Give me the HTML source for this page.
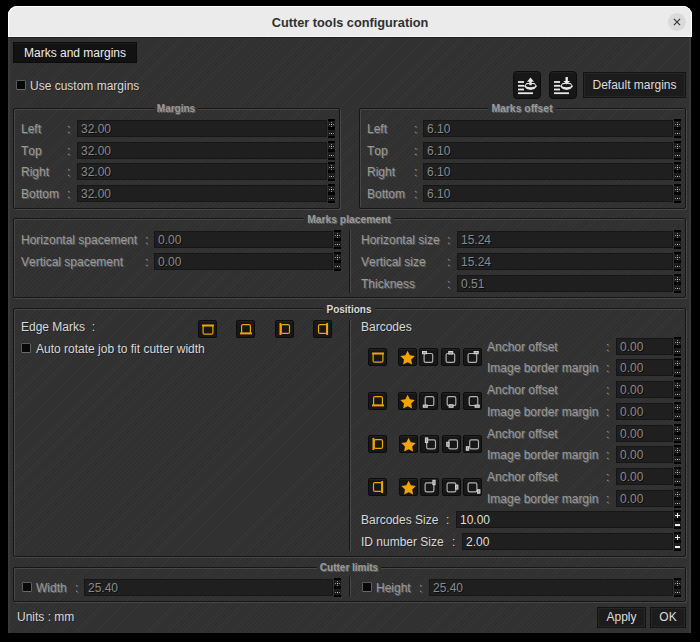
<!DOCTYPE html><html><head><meta charset="utf-8"><style>
*{margin:0;padding:0;box-sizing:border-box}
html,body{width:700px;height:642px;background:#000;overflow:hidden;font-family:"Liberation Sans",sans-serif;font-kerning:none}
.win{position:absolute;left:8px;top:37px;width:683px;height:596px;border-top:1px solid #1e1e1e;background-color:#303030;
 background-image:repeating-linear-gradient(135deg,rgba(255,255,255,0.025) 0 1px,rgba(0,0,0,0) 1px 3px);
 border-left:2px solid #3a3a3a;border-right:2px solid #3a3a3a}
.title{position:absolute;left:8px;top:6px;width:684px;height:31px;background:#ebebeb;border-radius:9px 9px 0 0;
 box-shadow:inset 1px 1px 0 #fff,inset -1px 0 0 #fff,inset 0 -1px 0 #f6f6f6}
.ttext{position:absolute;left:8px;width:684px;top:15px;text-align:center;font-weight:bold;font-size:12.75px;color:#303030;line-height:16px}
.close{position:absolute;left:667.9px;top:13.1px;width:18px;height:18px;border-radius:50%;background:#dadada}
.close svg{position:absolute;left:0;top:0}
.lab,.lab2,.dl{position:absolute;font-size:12px;line-height:14px;white-space:nowrap}
.lab{color:#d8d8d8;text-shadow:1px 1px 0 rgba(0,0,0,0.35)}
.dl{color:#9a9a9a;text-shadow:1px 1px 0 #5e5e5e}
.grp{position:absolute;border:1px solid #161616;border-radius:2px;box-shadow:1px 1px 0 #474747,inset 1px 1px 0 #474747}
.gt,.gte{position:absolute;text-align:center;font-size:10.3px;font-weight:bold;line-height:12px;white-space:nowrap}
.gt span,.gte span{background:#313131;padding:0 3px}
.gt{color:#9a9a9a;text-shadow:1px 1px 0 #5e5e5e}
.gte{color:#dadada;text-shadow:1px 1px 0 rgba(0,0,0,0.4)}
.inp{position:absolute;background:#1f1f1f;border:1px solid #161616;font-size:12px;line-height:15px;color:#8a8a8a;text-shadow:1px 1px 0 #0c0c0c}
.inp span{position:absolute;left:3px;top:1px}
.inp.en{color:#dedede;text-shadow:none}
.spin{position:absolute;width:7px}.spin svg{display:block}
.spin i{position:absolute;display:block}
.spin .p{left:1px;top:3px;width:5px;height:5px;background:
 linear-gradient(#8a8a8a,#8a8a8a) 2px 0/1px 5px no-repeat,linear-gradient(#8a8a8a,#8a8a8a) 0 2px/5px 1px no-repeat}
.spin .m{left:1px;bottom:4px;width:5px;height:1px;background:#8a8a8a}
.spin.en .p{background:linear-gradient(#eee,#eee) 2px 0/1px 5px no-repeat,linear-gradient(#eee,#eee) 0 2px/5px 1px no-repeat}
.spin.en .m{background:#eee;height:2px}
.chk{position:absolute;width:10px;height:10px;background:#080808;border:1px solid #5a5a5a;border-bottom-color:#6a6a6a;border-right-color:#626262;border-radius:1.5px}
.btn{position:absolute;background:#171717;border:1px solid #0c0c0c;border-radius:2px;box-shadow:inset 0 1px 0 #222}
.btn svg{position:absolute;left:0;top:0}
.pb{position:absolute;background:#1c1c1c;border:1px solid #131313;box-shadow:inset 0 0 0 1px #262626;font-size:12px;color:#dcdcdc;text-align:center;white-space:nowrap}
.tab{position:absolute;left:13px;top:42px;width:124px;height:21px;background:#121212;border:1px solid #0c0c0c;box-shadow:inset 0 1px 0 #1c1c1c;font-size:12px;color:#ececec;line-height:21px;text-align:center}
</style></head><body>
<div class="title"></div>
<div class="ttext">Cutter tools configuration</div>
<div class="close"><svg width="18" height="18" viewBox="0 0 18 18"><path d="M5.9 5.9L12.1 12.1M12.1 5.9L5.9 12.1" stroke="#333" stroke-width="1.15" fill="none"/></svg></div>
<div class="win"></div>

<div class="tab">Marks and margins</div>
<div class="chk" style="left:16px;top:80px"></div>
<div class="lab" style="left:30px;top:78.50px;">Use custom margins</div>
<div class="btn" style="left:513px;top:71px;width:28px;height:28px;border-radius:4px"><svg width="28" height="28" viewBox="0 0 28 28">
<rect x="4" y="9.1" width="6" height="1.8" fill="#e8e8e8"/><rect x="4" y="12.9" width="6" height="1.8" fill="#e8e8e8"/>
<rect x="4" y="16.6" width="6" height="1.8" fill="#e8e8e8"/><rect x="4" y="20.3" width="15" height="1.8" fill="#e8e8e8"/>
<path d="M10 14.2L12.6 11H20.6L23 14.2L20.4 16.9L16.6 17.9L12.8 16.9Z" fill="#e8e8e8"/>
<ellipse cx="16.6" cy="13.5" rx="4.7" ry="1.7" fill="#161616"/>
<path d="M13 9.7L16.5 5.5L20 9.7H17.7V13.2H15.3V9.7Z" fill="#e8e8e8"/></svg></div>
<div class="btn" style="left:549px;top:71px;width:28px;height:28px;border-radius:4px"><svg width="28" height="28" viewBox="0 0 28 28">
<rect x="4" y="9.1" width="6" height="1.8" fill="#e8e8e8"/><rect x="4" y="12.9" width="6" height="1.8" fill="#e8e8e8"/>
<rect x="4" y="16.6" width="6" height="1.8" fill="#e8e8e8"/><rect x="4" y="20.3" width="15" height="1.8" fill="#e8e8e8"/>
<path d="M10 14.2L12.6 11H20.6L23 14.2L20.4 16.9L16.6 17.9L12.8 16.9Z" fill="#e8e8e8"/>
<ellipse cx="16.6" cy="13.5" rx="4.7" ry="1.7" fill="#161616"/>
<path d="M13.3 8.9L16.7 12.5L20.1 8.9H17.9V4.9H15.5V8.9Z" fill="#e8e8e8"/></svg></div>
<div class="pb" style="left:583px;top:72px;width:103px;height:26px;line-height:25px">Default margins</div>
<div class="grp" style="left:13px;top:108px;width:327px;height:101px"></div>
<div class="gt" style="left:12px;top:102.8px;width:328px;font-size:10px"><span>Margins</span></div>
<div class="grp" style="left:359px;top:108px;width:327px;height:101px"></div>
<div class="gt" style="left:358px;top:102.8px;width:328px;font-size:10.4px"><span>Marks offset</span></div>
<div class="dl" style="left:21px;top:121.80px;">Left</div>
<div class="dl" style="left:67px;top:121.80px;">:</div>
<div class="inp" style="left:77px;top:120.00px;width:250px;height:17px"><span>32.00</span></div>
<div class="spin" style="left:328px;top:119.00px;height:19px"><svg width="7" height="19" viewBox="0 0 7 19"><rect width="7" height="19" fill="#1c1c1c"/><rect width="7" height="2" fill="#000"/><rect y="8" width="7" height="3" fill="#000"/><rect y="17" width="7" height="2" fill="#000"/><rect x="1" y="5" width="1" height="1" fill="#8a8a8a"/><rect x="3" y="5" width="1" height="1" fill="#d0d0d0"/><rect x="5" y="5" width="1" height="1" fill="#8a8a8a"/><rect x="3" y="3" width="1" height="1" fill="#8a8a8a"/><rect x="3" y="7" width="1" height="1" fill="#8a8a8a"/><rect x="1" y="14" width="1" height="1" fill="#8a8a8a"/><rect x="3" y="14" width="1" height="1" fill="#d0d0d0"/><rect x="5" y="14" width="1" height="1" fill="#8a8a8a"/></svg></div>
<div class="dl" style="left:367px;top:121.80px;">Left</div>
<div class="dl" style="left:414px;top:121.80px;">:</div>
<div class="inp" style="left:423px;top:120.00px;width:250px;height:17px"><span>6.10</span></div>
<div class="spin" style="left:674px;top:119.00px;height:19px"><svg width="7" height="19" viewBox="0 0 7 19"><rect width="7" height="19" fill="#1c1c1c"/><rect width="7" height="2" fill="#000"/><rect y="8" width="7" height="3" fill="#000"/><rect y="17" width="7" height="2" fill="#000"/><rect x="1" y="5" width="1" height="1" fill="#8a8a8a"/><rect x="3" y="5" width="1" height="1" fill="#d0d0d0"/><rect x="5" y="5" width="1" height="1" fill="#8a8a8a"/><rect x="3" y="3" width="1" height="1" fill="#8a8a8a"/><rect x="3" y="7" width="1" height="1" fill="#8a8a8a"/><rect x="1" y="14" width="1" height="1" fill="#8a8a8a"/><rect x="3" y="14" width="1" height="1" fill="#d0d0d0"/><rect x="5" y="14" width="1" height="1" fill="#8a8a8a"/></svg></div>
<div class="dl" style="left:21px;top:143.80px;">Top</div>
<div class="dl" style="left:67px;top:143.80px;">:</div>
<div class="inp" style="left:77px;top:142.00px;width:250px;height:17px"><span>32.00</span></div>
<div class="spin" style="left:328px;top:141.00px;height:19px"><svg width="7" height="19" viewBox="0 0 7 19"><rect width="7" height="19" fill="#1c1c1c"/><rect width="7" height="2" fill="#000"/><rect y="8" width="7" height="3" fill="#000"/><rect y="17" width="7" height="2" fill="#000"/><rect x="1" y="5" width="1" height="1" fill="#8a8a8a"/><rect x="3" y="5" width="1" height="1" fill="#d0d0d0"/><rect x="5" y="5" width="1" height="1" fill="#8a8a8a"/><rect x="3" y="3" width="1" height="1" fill="#8a8a8a"/><rect x="3" y="7" width="1" height="1" fill="#8a8a8a"/><rect x="1" y="14" width="1" height="1" fill="#8a8a8a"/><rect x="3" y="14" width="1" height="1" fill="#d0d0d0"/><rect x="5" y="14" width="1" height="1" fill="#8a8a8a"/></svg></div>
<div class="dl" style="left:367px;top:143.80px;">Top</div>
<div class="dl" style="left:414px;top:143.80px;">:</div>
<div class="inp" style="left:423px;top:142.00px;width:250px;height:17px"><span>6.10</span></div>
<div class="spin" style="left:674px;top:141.00px;height:19px"><svg width="7" height="19" viewBox="0 0 7 19"><rect width="7" height="19" fill="#1c1c1c"/><rect width="7" height="2" fill="#000"/><rect y="8" width="7" height="3" fill="#000"/><rect y="17" width="7" height="2" fill="#000"/><rect x="1" y="5" width="1" height="1" fill="#8a8a8a"/><rect x="3" y="5" width="1" height="1" fill="#d0d0d0"/><rect x="5" y="5" width="1" height="1" fill="#8a8a8a"/><rect x="3" y="3" width="1" height="1" fill="#8a8a8a"/><rect x="3" y="7" width="1" height="1" fill="#8a8a8a"/><rect x="1" y="14" width="1" height="1" fill="#8a8a8a"/><rect x="3" y="14" width="1" height="1" fill="#d0d0d0"/><rect x="5" y="14" width="1" height="1" fill="#8a8a8a"/></svg></div>
<div class="dl" style="left:21px;top:164.80px;">Right</div>
<div class="dl" style="left:67px;top:164.80px;">:</div>
<div class="inp" style="left:77px;top:163.00px;width:250px;height:17px"><span>32.00</span></div>
<div class="spin" style="left:328px;top:162.00px;height:19px"><svg width="7" height="19" viewBox="0 0 7 19"><rect width="7" height="19" fill="#1c1c1c"/><rect width="7" height="2" fill="#000"/><rect y="8" width="7" height="3" fill="#000"/><rect y="17" width="7" height="2" fill="#000"/><rect x="1" y="5" width="1" height="1" fill="#8a8a8a"/><rect x="3" y="5" width="1" height="1" fill="#d0d0d0"/><rect x="5" y="5" width="1" height="1" fill="#8a8a8a"/><rect x="3" y="3" width="1" height="1" fill="#8a8a8a"/><rect x="3" y="7" width="1" height="1" fill="#8a8a8a"/><rect x="1" y="14" width="1" height="1" fill="#8a8a8a"/><rect x="3" y="14" width="1" height="1" fill="#d0d0d0"/><rect x="5" y="14" width="1" height="1" fill="#8a8a8a"/></svg></div>
<div class="dl" style="left:367px;top:164.80px;">Right</div>
<div class="dl" style="left:414px;top:164.80px;">:</div>
<div class="inp" style="left:423px;top:163.00px;width:250px;height:17px"><span>6.10</span></div>
<div class="spin" style="left:674px;top:162.00px;height:19px"><svg width="7" height="19" viewBox="0 0 7 19"><rect width="7" height="19" fill="#1c1c1c"/><rect width="7" height="2" fill="#000"/><rect y="8" width="7" height="3" fill="#000"/><rect y="17" width="7" height="2" fill="#000"/><rect x="1" y="5" width="1" height="1" fill="#8a8a8a"/><rect x="3" y="5" width="1" height="1" fill="#d0d0d0"/><rect x="5" y="5" width="1" height="1" fill="#8a8a8a"/><rect x="3" y="3" width="1" height="1" fill="#8a8a8a"/><rect x="3" y="7" width="1" height="1" fill="#8a8a8a"/><rect x="1" y="14" width="1" height="1" fill="#8a8a8a"/><rect x="3" y="14" width="1" height="1" fill="#d0d0d0"/><rect x="5" y="14" width="1" height="1" fill="#8a8a8a"/></svg></div>
<div class="dl" style="left:21px;top:186.80px;">Bottom</div>
<div class="dl" style="left:67px;top:186.80px;">:</div>
<div class="inp" style="left:77px;top:185.00px;width:250px;height:17px"><span>32.00</span></div>
<div class="spin" style="left:328px;top:184.00px;height:19px"><svg width="7" height="19" viewBox="0 0 7 19"><rect width="7" height="19" fill="#1c1c1c"/><rect width="7" height="2" fill="#000"/><rect y="8" width="7" height="3" fill="#000"/><rect y="17" width="7" height="2" fill="#000"/><rect x="1" y="5" width="1" height="1" fill="#8a8a8a"/><rect x="3" y="5" width="1" height="1" fill="#d0d0d0"/><rect x="5" y="5" width="1" height="1" fill="#8a8a8a"/><rect x="3" y="3" width="1" height="1" fill="#8a8a8a"/><rect x="3" y="7" width="1" height="1" fill="#8a8a8a"/><rect x="1" y="14" width="1" height="1" fill="#8a8a8a"/><rect x="3" y="14" width="1" height="1" fill="#d0d0d0"/><rect x="5" y="14" width="1" height="1" fill="#8a8a8a"/></svg></div>
<div class="dl" style="left:367px;top:186.80px;">Bottom</div>
<div class="dl" style="left:414px;top:186.80px;">:</div>
<div class="inp" style="left:423px;top:185.00px;width:250px;height:17px"><span>6.10</span></div>
<div class="spin" style="left:674px;top:184.00px;height:19px"><svg width="7" height="19" viewBox="0 0 7 19"><rect width="7" height="19" fill="#1c1c1c"/><rect width="7" height="2" fill="#000"/><rect y="8" width="7" height="3" fill="#000"/><rect y="17" width="7" height="2" fill="#000"/><rect x="1" y="5" width="1" height="1" fill="#8a8a8a"/><rect x="3" y="5" width="1" height="1" fill="#d0d0d0"/><rect x="5" y="5" width="1" height="1" fill="#8a8a8a"/><rect x="3" y="3" width="1" height="1" fill="#8a8a8a"/><rect x="3" y="7" width="1" height="1" fill="#8a8a8a"/><rect x="1" y="14" width="1" height="1" fill="#8a8a8a"/><rect x="3" y="14" width="1" height="1" fill="#d0d0d0"/><rect x="5" y="14" width="1" height="1" fill="#8a8a8a"/></svg></div>
<div class="grp" style="left:13px;top:218px;width:673px;height:80px"></div>
<div class="gt" style="left:12px;top:213.8px;width:674px;font-size:10.3px"><span>Marks placement</span></div>
<div style="position:absolute;left:349px;top:230px;width:1px;height:63px;background:#161616;box-shadow:1px 0 0 #474747"></div>
<div class="dl" style="left:21px;top:232.80px;">Horizontal spacement</div>
<div class="dl" style="left:145px;top:232.80px;">:</div>
<div class="inp" style="left:154px;top:231.00px;width:179px;height:17px"><span>0.00</span></div>
<div class="spin" style="left:334px;top:230.00px;height:19px"><svg width="7" height="19" viewBox="0 0 7 19"><rect width="7" height="19" fill="#1c1c1c"/><rect width="7" height="2" fill="#000"/><rect y="8" width="7" height="3" fill="#000"/><rect y="17" width="7" height="2" fill="#000"/><rect x="1" y="5" width="1" height="1" fill="#8a8a8a"/><rect x="3" y="5" width="1" height="1" fill="#d0d0d0"/><rect x="5" y="5" width="1" height="1" fill="#8a8a8a"/><rect x="3" y="3" width="1" height="1" fill="#8a8a8a"/><rect x="3" y="7" width="1" height="1" fill="#8a8a8a"/><rect x="1" y="14" width="1" height="1" fill="#8a8a8a"/><rect x="3" y="14" width="1" height="1" fill="#d0d0d0"/><rect x="5" y="14" width="1" height="1" fill="#8a8a8a"/></svg></div>
<div class="dl" style="left:21px;top:254.80px;">Vertical spacement</div>
<div class="dl" style="left:145px;top:254.80px;">:</div>
<div class="inp" style="left:154px;top:253.00px;width:179px;height:17px"><span>0.00</span></div>
<div class="spin" style="left:334px;top:252.00px;height:19px"><svg width="7" height="19" viewBox="0 0 7 19"><rect width="7" height="19" fill="#1c1c1c"/><rect width="7" height="2" fill="#000"/><rect y="8" width="7" height="3" fill="#000"/><rect y="17" width="7" height="2" fill="#000"/><rect x="1" y="5" width="1" height="1" fill="#8a8a8a"/><rect x="3" y="5" width="1" height="1" fill="#d0d0d0"/><rect x="5" y="5" width="1" height="1" fill="#8a8a8a"/><rect x="3" y="3" width="1" height="1" fill="#8a8a8a"/><rect x="3" y="7" width="1" height="1" fill="#8a8a8a"/><rect x="1" y="14" width="1" height="1" fill="#8a8a8a"/><rect x="3" y="14" width="1" height="1" fill="#d0d0d0"/><rect x="5" y="14" width="1" height="1" fill="#8a8a8a"/></svg></div>
<div class="dl" style="left:361px;top:232.80px;">Horizontal size</div>
<div class="dl" style="left:447px;top:232.80px;">:</div>
<div class="inp" style="left:457px;top:231.00px;width:216px;height:17px"><span>15.24</span></div>
<div class="spin" style="left:674px;top:230.00px;height:19px"><svg width="7" height="19" viewBox="0 0 7 19"><rect width="7" height="19" fill="#1c1c1c"/><rect width="7" height="2" fill="#000"/><rect y="8" width="7" height="3" fill="#000"/><rect y="17" width="7" height="2" fill="#000"/><rect x="1" y="5" width="1" height="1" fill="#8a8a8a"/><rect x="3" y="5" width="1" height="1" fill="#d0d0d0"/><rect x="5" y="5" width="1" height="1" fill="#8a8a8a"/><rect x="3" y="3" width="1" height="1" fill="#8a8a8a"/><rect x="3" y="7" width="1" height="1" fill="#8a8a8a"/><rect x="1" y="14" width="1" height="1" fill="#8a8a8a"/><rect x="3" y="14" width="1" height="1" fill="#d0d0d0"/><rect x="5" y="14" width="1" height="1" fill="#8a8a8a"/></svg></div>
<div class="dl" style="left:361px;top:254.80px;">Vertical size</div>
<div class="dl" style="left:447px;top:254.80px;">:</div>
<div class="inp" style="left:457px;top:253.00px;width:216px;height:17px"><span>15.24</span></div>
<div class="spin" style="left:674px;top:252.00px;height:19px"><svg width="7" height="19" viewBox="0 0 7 19"><rect width="7" height="19" fill="#1c1c1c"/><rect width="7" height="2" fill="#000"/><rect y="8" width="7" height="3" fill="#000"/><rect y="17" width="7" height="2" fill="#000"/><rect x="1" y="5" width="1" height="1" fill="#8a8a8a"/><rect x="3" y="5" width="1" height="1" fill="#d0d0d0"/><rect x="5" y="5" width="1" height="1" fill="#8a8a8a"/><rect x="3" y="3" width="1" height="1" fill="#8a8a8a"/><rect x="3" y="7" width="1" height="1" fill="#8a8a8a"/><rect x="1" y="14" width="1" height="1" fill="#8a8a8a"/><rect x="3" y="14" width="1" height="1" fill="#d0d0d0"/><rect x="5" y="14" width="1" height="1" fill="#8a8a8a"/></svg></div>
<div class="dl" style="left:361px;top:276.80px;">Thickness</div>
<div class="dl" style="left:447px;top:276.80px;">:</div>
<div class="inp" style="left:457px;top:275.00px;width:216px;height:17px"><span>0.51</span></div>
<div class="spin" style="left:674px;top:274.00px;height:19px"><svg width="7" height="19" viewBox="0 0 7 19"><rect width="7" height="19" fill="#1c1c1c"/><rect width="7" height="2" fill="#000"/><rect y="8" width="7" height="3" fill="#000"/><rect y="17" width="7" height="2" fill="#000"/><rect x="1" y="5" width="1" height="1" fill="#8a8a8a"/><rect x="3" y="5" width="1" height="1" fill="#d0d0d0"/><rect x="5" y="5" width="1" height="1" fill="#8a8a8a"/><rect x="3" y="3" width="1" height="1" fill="#8a8a8a"/><rect x="3" y="7" width="1" height="1" fill="#8a8a8a"/><rect x="1" y="14" width="1" height="1" fill="#8a8a8a"/><rect x="3" y="14" width="1" height="1" fill="#d0d0d0"/><rect x="5" y="14" width="1" height="1" fill="#8a8a8a"/></svg></div>
<div class="grp" style="left:13px;top:308px;width:673px;height:249px"></div>
<div class="gte" style="left:12px;top:303.5px;width:674px;font-size:10px"><span>Positions</span></div>
<div style="position:absolute;left:349px;top:320px;width:1px;height:231px;background:#161616;box-shadow:1px 0 0 #474747"></div>
<div class="lab" style="left:21px;top:320.00px;">Edge Marks&nbsp;&nbsp;:</div>
<div class="chk" style="left:21px;top:343px"></div>
<div class="lab" style="left:36px;top:341.80px;">Auto rotate job to fit cutter width</div>
<div class="btn" style="left:198px;top:320px;width:19px;height:18px"><svg width="19" height="18" viewBox="0 0 19 18"><rect x="4.1" y="4.6" width="9.8" height="8.6" rx="1.5" fill="none" stroke="#f0a500" stroke-width="1.2"/><rect x="3" y="3.5" width="12" height="1.9" fill="#f0a500"/></svg></div>
<div class="btn" style="left:236px;top:320px;width:19px;height:18px"><svg width="19" height="18" viewBox="0 0 19 18"><rect x="4.6" y="3.6" width="8.8" height="8.8" rx="1.5" fill="none" stroke="#f0a500" stroke-width="1.2"/><rect x="3" y="11.5" width="12" height="1.9" fill="#f0a500"/></svg></div>
<div class="btn" style="left:275px;top:320px;width:19px;height:18px"><svg width="19" height="18" viewBox="0 0 19 18"><rect x="5.2" y="3.6" width="8.3" height="8.8" rx="1.5" fill="none" stroke="#f0a500" stroke-width="1.2"/><rect x="3.5" y="2" width="1.9" height="12" fill="#f0a500"/></svg></div>
<div class="btn" style="left:313px;top:320px;width:19px;height:18px"><svg width="19" height="18" viewBox="0 0 19 18"><rect x="4.5" y="3.6" width="8.3" height="8.8" rx="1.5" fill="none" stroke="#f0a500" stroke-width="1.2"/><rect x="12.2" y="2" width="1.9" height="12" fill="#f0a500"/></svg></div>
<div class="lab" style="left:361px;top:320.00px;">Barcodes</div>
<div class="btn" style="left:368px;top:348px;width:19px;height:18px"><svg width="19" height="18" viewBox="0 0 19 18"><rect x="4.1" y="4.6" width="9.8" height="8.6" rx="1.5" fill="none" stroke="#f0a500" stroke-width="1.2"/><rect x="3" y="3.5" width="12" height="1.9" fill="#f0a500"/></svg></div>
<div class="btn" style="left:398px;top:348px;width:19px;height:18px"><svg width="19" height="18" viewBox="0 0 19 18"><path d="M8.60,1.80 L10.83,6.33 L15.83,7.05 L12.21,10.57 L13.07,15.55 L8.60,13.20 L4.13,15.55 L4.99,10.57 L1.37,7.05 L6.37,6.33Z" fill="#f0a500"/></svg></div>
<div class="btn" style="left:419px;top:348px;width:19px;height:18px"><svg width="19" height="18" viewBox="0 0 19 18"><rect x="4.1" y="4.5" width="8.6" height="8.9" rx="1.6" fill="none" stroke="#b4b4b4" stroke-width="1.15"/><rect x="2" y="2" width="5" height="3.2" fill="#d4d4d4"/><rect x="3" y="3" width="3" height="1.2000000000000002" fill="#9a9a9a"/></svg></div>
<div class="btn" style="left:441px;top:348px;width:19px;height:18px"><svg width="19" height="18" viewBox="0 0 19 18"><rect x="4.1" y="4.5" width="8.6" height="8.9" rx="1.6" fill="none" stroke="#b4b4b4" stroke-width="1.15"/><rect x="6.2" y="2" width="5" height="3.6" fill="#d4d4d4"/><rect x="7.2" y="3" width="3" height="1.6" fill="#9a9a9a"/></svg></div>
<div class="btn" style="left:463px;top:348px;width:19px;height:18px"><svg width="19" height="18" viewBox="0 0 19 18"><rect x="4.1" y="4.5" width="8.6" height="8.9" rx="1.6" fill="none" stroke="#b4b4b4" stroke-width="1.15"/><rect x="9.6" y="2" width="5.2" height="3.2" fill="#d4d4d4"/><rect x="10.6" y="3" width="3.2" height="1.2000000000000002" fill="#9a9a9a"/></svg></div>
<div class="dl" style="left:487px;top:339.80px;">Anchor offset</div>
<div class="dl" style="left:606px;top:339.80px;">:</div>
<div class="inp" style="left:616px;top:338.00px;width:57px;height:17px"><span>0.00</span></div>
<div class="spin" style="left:674px;top:337.00px;height:19px"><svg width="7" height="19" viewBox="0 0 7 19"><rect width="7" height="19" fill="#1c1c1c"/><rect width="7" height="2" fill="#000"/><rect y="8" width="7" height="3" fill="#000"/><rect y="17" width="7" height="2" fill="#000"/><rect x="1" y="5" width="1" height="1" fill="#8a8a8a"/><rect x="3" y="5" width="1" height="1" fill="#d0d0d0"/><rect x="5" y="5" width="1" height="1" fill="#8a8a8a"/><rect x="3" y="3" width="1" height="1" fill="#8a8a8a"/><rect x="3" y="7" width="1" height="1" fill="#8a8a8a"/><rect x="1" y="14" width="1" height="1" fill="#8a8a8a"/><rect x="3" y="14" width="1" height="1" fill="#d0d0d0"/><rect x="5" y="14" width="1" height="1" fill="#8a8a8a"/></svg></div>
<div class="dl" style="left:487px;top:360.80px;">Image border margin</div>
<div class="dl" style="left:606px;top:360.80px;">:</div>
<div class="inp" style="left:616px;top:359.00px;width:57px;height:17px"><span>0.00</span></div>
<div class="spin" style="left:674px;top:358.00px;height:19px"><svg width="7" height="19" viewBox="0 0 7 19"><rect width="7" height="19" fill="#1c1c1c"/><rect width="7" height="2" fill="#000"/><rect y="8" width="7" height="3" fill="#000"/><rect y="17" width="7" height="2" fill="#000"/><rect x="1" y="5" width="1" height="1" fill="#8a8a8a"/><rect x="3" y="5" width="1" height="1" fill="#d0d0d0"/><rect x="5" y="5" width="1" height="1" fill="#8a8a8a"/><rect x="3" y="3" width="1" height="1" fill="#8a8a8a"/><rect x="3" y="7" width="1" height="1" fill="#8a8a8a"/><rect x="1" y="14" width="1" height="1" fill="#8a8a8a"/><rect x="3" y="14" width="1" height="1" fill="#d0d0d0"/><rect x="5" y="14" width="1" height="1" fill="#8a8a8a"/></svg></div>
<div class="btn" style="left:368px;top:392px;width:19px;height:18px"><svg width="19" height="18" viewBox="0 0 19 18"><rect x="4.6" y="3.6" width="8.8" height="8.8" rx="1.5" fill="none" stroke="#f0a500" stroke-width="1.2"/><rect x="3" y="11.5" width="12" height="1.9" fill="#f0a500"/></svg></div>
<div class="btn" style="left:398px;top:392px;width:19px;height:18px"><svg width="19" height="18" viewBox="0 0 19 18"><path d="M8.60,1.80 L10.83,6.33 L15.83,7.05 L12.21,10.57 L13.07,15.55 L8.60,13.20 L4.13,15.55 L4.99,10.57 L1.37,7.05 L6.37,6.33Z" fill="#f0a500"/></svg></div>
<div class="btn" style="left:419px;top:392px;width:19px;height:18px"><svg width="19" height="18" viewBox="0 0 19 18"><rect x="5.2" y="3.6" width="8.6" height="8.9" rx="1.6" fill="none" stroke="#b4b4b4" stroke-width="1.15"/><rect x="2.8" y="11.6" width="5" height="3.2" fill="#d4d4d4"/><rect x="3.8" y="12.6" width="3" height="1.2000000000000002" fill="#9a9a9a"/></svg></div>
<div class="btn" style="left:441px;top:392px;width:19px;height:18px"><svg width="19" height="18" viewBox="0 0 19 18"><rect x="5.2" y="3.6" width="8.6" height="8.9" rx="1.6" fill="none" stroke="#b4b4b4" stroke-width="1.15"/><rect x="6.6" y="11.2" width="5" height="3.6" fill="#d4d4d4"/><rect x="7.6" y="12.2" width="3" height="1.6" fill="#9a9a9a"/></svg></div>
<div class="btn" style="left:463px;top:392px;width:19px;height:18px"><svg width="19" height="18" viewBox="0 0 19 18"><rect x="5.2" y="3.6" width="8.6" height="8.9" rx="1.6" fill="none" stroke="#b4b4b4" stroke-width="1.15"/><rect x="10.6" y="11.6" width="5.2" height="3.2" fill="#d4d4d4"/><rect x="11.6" y="12.6" width="3.2" height="1.2000000000000002" fill="#9a9a9a"/></svg></div>
<div class="dl" style="left:487px;top:382.80px;">Anchor offset</div>
<div class="dl" style="left:606px;top:382.80px;">:</div>
<div class="inp" style="left:616px;top:381.00px;width:57px;height:17px"><span>0.00</span></div>
<div class="spin" style="left:674px;top:380.00px;height:19px"><svg width="7" height="19" viewBox="0 0 7 19"><rect width="7" height="19" fill="#1c1c1c"/><rect width="7" height="2" fill="#000"/><rect y="8" width="7" height="3" fill="#000"/><rect y="17" width="7" height="2" fill="#000"/><rect x="1" y="5" width="1" height="1" fill="#8a8a8a"/><rect x="3" y="5" width="1" height="1" fill="#d0d0d0"/><rect x="5" y="5" width="1" height="1" fill="#8a8a8a"/><rect x="3" y="3" width="1" height="1" fill="#8a8a8a"/><rect x="3" y="7" width="1" height="1" fill="#8a8a8a"/><rect x="1" y="14" width="1" height="1" fill="#8a8a8a"/><rect x="3" y="14" width="1" height="1" fill="#d0d0d0"/><rect x="5" y="14" width="1" height="1" fill="#8a8a8a"/></svg></div>
<div class="dl" style="left:487px;top:404.80px;">Image border margin</div>
<div class="dl" style="left:606px;top:404.80px;">:</div>
<div class="inp" style="left:616px;top:403.00px;width:57px;height:17px"><span>0.00</span></div>
<div class="spin" style="left:674px;top:402.00px;height:19px"><svg width="7" height="19" viewBox="0 0 7 19"><rect width="7" height="19" fill="#1c1c1c"/><rect width="7" height="2" fill="#000"/><rect y="8" width="7" height="3" fill="#000"/><rect y="17" width="7" height="2" fill="#000"/><rect x="1" y="5" width="1" height="1" fill="#8a8a8a"/><rect x="3" y="5" width="1" height="1" fill="#d0d0d0"/><rect x="5" y="5" width="1" height="1" fill="#8a8a8a"/><rect x="3" y="3" width="1" height="1" fill="#8a8a8a"/><rect x="3" y="7" width="1" height="1" fill="#8a8a8a"/><rect x="1" y="14" width="1" height="1" fill="#8a8a8a"/><rect x="3" y="14" width="1" height="1" fill="#d0d0d0"/><rect x="5" y="14" width="1" height="1" fill="#8a8a8a"/></svg></div>
<div class="btn" style="left:368px;top:435px;width:19px;height:18px"><svg width="19" height="18" viewBox="0 0 19 18"><rect x="5.2" y="3.6" width="8.3" height="8.8" rx="1.5" fill="none" stroke="#f0a500" stroke-width="1.2"/><rect x="3.5" y="2" width="1.9" height="12" fill="#f0a500"/></svg></div>
<div class="btn" style="left:399px;top:435px;width:19px;height:18px"><svg width="19" height="18" viewBox="0 0 19 18"><path d="M8.60,1.80 L10.83,6.33 L15.83,7.05 L12.21,10.57 L13.07,15.55 L8.60,13.20 L4.13,15.55 L4.99,10.57 L1.37,7.05 L6.37,6.33Z" fill="#f0a500"/></svg></div>
<div class="btn" style="left:420px;top:435px;width:19px;height:18px"><svg width="19" height="18" viewBox="0 0 19 18"><rect x="5.7" y="3.9" width="8.8" height="8.9" rx="1.6" fill="none" stroke="#b4b4b4" stroke-width="1.15"/><rect x="3.9" y="1.4" width="3.3" height="5.6" fill="#d4d4d4"/><rect x="4.9" y="2.4" width="1.2999999999999998" height="3.5999999999999996" fill="#9a9a9a"/></svg></div>
<div class="btn" style="left:442px;top:435px;width:19px;height:18px"><svg width="19" height="18" viewBox="0 0 19 18"><rect x="5.7" y="3.9" width="8.8" height="8.9" rx="1.6" fill="none" stroke="#b4b4b4" stroke-width="1.15"/><rect x="3.2" y="5.8" width="3.4" height="5.0" fill="#d4d4d4"/><rect x="4.2" y="6.8" width="1.4" height="3.0" fill="#9a9a9a"/></svg></div>
<div class="btn" style="left:463px;top:435px;width:19px;height:18px"><svg width="19" height="18" viewBox="0 0 19 18"><rect x="5.7" y="3.9" width="8.8" height="8.9" rx="1.6" fill="none" stroke="#b4b4b4" stroke-width="1.15"/><rect x="1.8" y="10.2" width="3.4" height="4.6" fill="#d4d4d4"/><rect x="2.8" y="11.2" width="1.4" height="2.5999999999999996" fill="#9a9a9a"/></svg></div>
<div class="dl" style="left:487px;top:426.80px;">Anchor offset</div>
<div class="dl" style="left:606px;top:426.80px;">:</div>
<div class="inp" style="left:616px;top:425.00px;width:57px;height:17px"><span>0.00</span></div>
<div class="spin" style="left:674px;top:424.00px;height:19px"><svg width="7" height="19" viewBox="0 0 7 19"><rect width="7" height="19" fill="#1c1c1c"/><rect width="7" height="2" fill="#000"/><rect y="8" width="7" height="3" fill="#000"/><rect y="17" width="7" height="2" fill="#000"/><rect x="1" y="5" width="1" height="1" fill="#8a8a8a"/><rect x="3" y="5" width="1" height="1" fill="#d0d0d0"/><rect x="5" y="5" width="1" height="1" fill="#8a8a8a"/><rect x="3" y="3" width="1" height="1" fill="#8a8a8a"/><rect x="3" y="7" width="1" height="1" fill="#8a8a8a"/><rect x="1" y="14" width="1" height="1" fill="#8a8a8a"/><rect x="3" y="14" width="1" height="1" fill="#d0d0d0"/><rect x="5" y="14" width="1" height="1" fill="#8a8a8a"/></svg></div>
<div class="dl" style="left:487px;top:447.80px;">Image border margin</div>
<div class="dl" style="left:606px;top:447.80px;">:</div>
<div class="inp" style="left:616px;top:446.00px;width:57px;height:17px"><span>0.00</span></div>
<div class="spin" style="left:674px;top:445.00px;height:19px"><svg width="7" height="19" viewBox="0 0 7 19"><rect width="7" height="19" fill="#1c1c1c"/><rect width="7" height="2" fill="#000"/><rect y="8" width="7" height="3" fill="#000"/><rect y="17" width="7" height="2" fill="#000"/><rect x="1" y="5" width="1" height="1" fill="#8a8a8a"/><rect x="3" y="5" width="1" height="1" fill="#d0d0d0"/><rect x="5" y="5" width="1" height="1" fill="#8a8a8a"/><rect x="3" y="3" width="1" height="1" fill="#8a8a8a"/><rect x="3" y="7" width="1" height="1" fill="#8a8a8a"/><rect x="1" y="14" width="1" height="1" fill="#8a8a8a"/><rect x="3" y="14" width="1" height="1" fill="#d0d0d0"/><rect x="5" y="14" width="1" height="1" fill="#8a8a8a"/></svg></div>
<div class="btn" style="left:368px;top:478px;width:19px;height:18px"><svg width="19" height="18" viewBox="0 0 19 18"><rect x="4.5" y="3.6" width="8.3" height="8.8" rx="1.5" fill="none" stroke="#f0a500" stroke-width="1.2"/><rect x="12.2" y="2" width="1.9" height="12" fill="#f0a500"/></svg></div>
<div class="btn" style="left:399px;top:478px;width:19px;height:18px"><svg width="19" height="18" viewBox="0 0 19 18"><path d="M8.60,1.80 L10.83,6.33 L15.83,7.05 L12.21,10.57 L13.07,15.55 L8.60,13.20 L4.13,15.55 L4.99,10.57 L1.37,7.05 L6.37,6.33Z" fill="#f0a500"/></svg></div>
<div class="btn" style="left:420px;top:478px;width:19px;height:18px"><svg width="19" height="18" viewBox="0 0 19 18"><rect x="4.1" y="3.9" width="8.8" height="8.9" rx="1.6" fill="none" stroke="#b4b4b4" stroke-width="1.15"/><rect x="11.4" y="0.8" width="3.2" height="5.4" fill="#d4d4d4"/><rect x="12.4" y="1.8" width="1.2000000000000002" height="3.4000000000000004" fill="#9a9a9a"/></svg></div>
<div class="btn" style="left:442px;top:478px;width:19px;height:18px"><svg width="19" height="18" viewBox="0 0 19 18"><rect x="4.1" y="3.9" width="8.8" height="8.9" rx="1.6" fill="none" stroke="#b4b4b4" stroke-width="1.15"/><rect x="12.0" y="5.6" width="3.4" height="5.0" fill="#d4d4d4"/><rect x="13.0" y="6.6" width="1.4" height="3.0" fill="#9a9a9a"/></svg></div>
<div class="btn" style="left:463px;top:478px;width:19px;height:18px"><svg width="19" height="18" viewBox="0 0 19 18"><rect x="4.1" y="3.9" width="8.8" height="8.9" rx="1.6" fill="none" stroke="#b4b4b4" stroke-width="1.15"/><rect x="13.0" y="10.2" width="3.4" height="4.6" fill="#d4d4d4"/><rect x="14.0" y="11.2" width="1.4" height="2.5999999999999996" fill="#9a9a9a"/></svg></div>
<div class="dl" style="left:487px;top:469.80px;">Anchor offset</div>
<div class="dl" style="left:606px;top:469.80px;">:</div>
<div class="inp" style="left:616px;top:468.00px;width:57px;height:17px"><span>0.00</span></div>
<div class="spin" style="left:674px;top:467.00px;height:19px"><svg width="7" height="19" viewBox="0 0 7 19"><rect width="7" height="19" fill="#1c1c1c"/><rect width="7" height="2" fill="#000"/><rect y="8" width="7" height="3" fill="#000"/><rect y="17" width="7" height="2" fill="#000"/><rect x="1" y="5" width="1" height="1" fill="#8a8a8a"/><rect x="3" y="5" width="1" height="1" fill="#d0d0d0"/><rect x="5" y="5" width="1" height="1" fill="#8a8a8a"/><rect x="3" y="3" width="1" height="1" fill="#8a8a8a"/><rect x="3" y="7" width="1" height="1" fill="#8a8a8a"/><rect x="1" y="14" width="1" height="1" fill="#8a8a8a"/><rect x="3" y="14" width="1" height="1" fill="#d0d0d0"/><rect x="5" y="14" width="1" height="1" fill="#8a8a8a"/></svg></div>
<div class="dl" style="left:487px;top:491.80px;">Image border margin</div>
<div class="dl" style="left:606px;top:491.80px;">:</div>
<div class="inp" style="left:616px;top:490.00px;width:57px;height:17px"><span>0.00</span></div>
<div class="spin" style="left:674px;top:489.00px;height:19px"><svg width="7" height="19" viewBox="0 0 7 19"><rect width="7" height="19" fill="#1c1c1c"/><rect width="7" height="2" fill="#000"/><rect y="8" width="7" height="3" fill="#000"/><rect y="17" width="7" height="2" fill="#000"/><rect x="1" y="5" width="1" height="1" fill="#8a8a8a"/><rect x="3" y="5" width="1" height="1" fill="#d0d0d0"/><rect x="5" y="5" width="1" height="1" fill="#8a8a8a"/><rect x="3" y="3" width="1" height="1" fill="#8a8a8a"/><rect x="3" y="7" width="1" height="1" fill="#8a8a8a"/><rect x="1" y="14" width="1" height="1" fill="#8a8a8a"/><rect x="3" y="14" width="1" height="1" fill="#d0d0d0"/><rect x="5" y="14" width="1" height="1" fill="#8a8a8a"/></svg></div>
<div class="lab" style="left:361px;top:512.80px;">Barcodes Size</div>
<div class="lab" style="left:446px;top:512.80px;">:</div>
<div class="inp en" style="left:456px;top:511.00px;width:217px;height:17px"><span>10.00</span></div>
<div class="spin" style="left:674px;top:510.00px;height:19px"><svg width="7" height="19" viewBox="0 0 7 19"><rect width="7" height="19" fill="#1c1c1c"/><rect width="7" height="2" fill="#000"/><rect y="8" width="7" height="3" fill="#000"/><rect y="17" width="7" height="2" fill="#000"/><rect x="3" y="3" width="1" height="5" fill="#eeeeee"/><rect x="1" y="5" width="5" height="1" fill="#eeeeee"/><rect x="1" y="14" width="5" height="2" fill="#eeeeee"/></svg></div>
<div class="lab" style="left:361px;top:534.80px;">ID number Size</div>
<div class="lab" style="left:452px;top:534.80px;">:</div>
<div class="inp en" style="left:462px;top:533.00px;width:211px;height:17px"><span>2.00</span></div>
<div class="spin" style="left:674px;top:532.00px;height:19px"><svg width="7" height="19" viewBox="0 0 7 19"><rect width="7" height="19" fill="#1c1c1c"/><rect width="7" height="2" fill="#000"/><rect y="8" width="7" height="3" fill="#000"/><rect y="17" width="7" height="2" fill="#000"/><rect x="3" y="3" width="1" height="5" fill="#eeeeee"/><rect x="1" y="5" width="5" height="1" fill="#eeeeee"/><rect x="1" y="14" width="5" height="2" fill="#eeeeee"/></svg></div>
<div class="grp" style="left:13px;top:567px;width:673px;height:35px"></div>
<div class="gt" style="left:12px;top:562px;width:674px;font-size:10px"><span>Cutter limits</span></div>
<div style="position:absolute;left:349px;top:577px;width:1px;height:20px;background:#161616;box-shadow:1px 0 0 #474747"></div>
<div class="chk" style="left:22px;top:582px"></div>
<div class="dl" style="left:36px;top:581.00px;">Width</div>
<div class="dl" style="left:75px;top:581.00px;">:</div>
<div class="inp" style="left:84px;top:579.00px;width:249px;height:17px"><span>25.40</span></div>
<div class="spin" style="left:334px;top:578.00px;height:19px"><svg width="7" height="19" viewBox="0 0 7 19"><rect width="7" height="19" fill="#1c1c1c"/><rect width="7" height="2" fill="#000"/><rect y="8" width="7" height="3" fill="#000"/><rect y="17" width="7" height="2" fill="#000"/><rect x="1" y="5" width="1" height="1" fill="#8a8a8a"/><rect x="3" y="5" width="1" height="1" fill="#d0d0d0"/><rect x="5" y="5" width="1" height="1" fill="#8a8a8a"/><rect x="3" y="3" width="1" height="1" fill="#8a8a8a"/><rect x="3" y="7" width="1" height="1" fill="#8a8a8a"/><rect x="1" y="14" width="1" height="1" fill="#8a8a8a"/><rect x="3" y="14" width="1" height="1" fill="#d0d0d0"/><rect x="5" y="14" width="1" height="1" fill="#8a8a8a"/></svg></div>
<div class="chk" style="left:362px;top:582px"></div>
<div class="dl" style="left:376px;top:581.00px;">Height</div>
<div class="dl" style="left:419px;top:581.00px;">:</div>
<div class="inp" style="left:429px;top:579.00px;width:244px;height:17px"><span>25.40</span></div>
<div class="spin" style="left:674px;top:578.00px;height:19px"><svg width="7" height="19" viewBox="0 0 7 19"><rect width="7" height="19" fill="#1c1c1c"/><rect width="7" height="2" fill="#000"/><rect y="8" width="7" height="3" fill="#000"/><rect y="17" width="7" height="2" fill="#000"/><rect x="1" y="5" width="1" height="1" fill="#8a8a8a"/><rect x="3" y="5" width="1" height="1" fill="#d0d0d0"/><rect x="5" y="5" width="1" height="1" fill="#8a8a8a"/><rect x="3" y="3" width="1" height="1" fill="#8a8a8a"/><rect x="3" y="7" width="1" height="1" fill="#8a8a8a"/><rect x="1" y="14" width="1" height="1" fill="#8a8a8a"/><rect x="3" y="14" width="1" height="1" fill="#d0d0d0"/><rect x="5" y="14" width="1" height="1" fill="#8a8a8a"/></svg></div>
<div class="lab" style="left:17px;top:609.60px;">Units : mm</div>
<div class="pb" style="left:597px;top:607px;width:49px;height:21px;line-height:19px">Apply</div>
<div class="pb" style="left:650px;top:607px;width:36px;height:21px;line-height:19px">OK</div>
</body></html>
